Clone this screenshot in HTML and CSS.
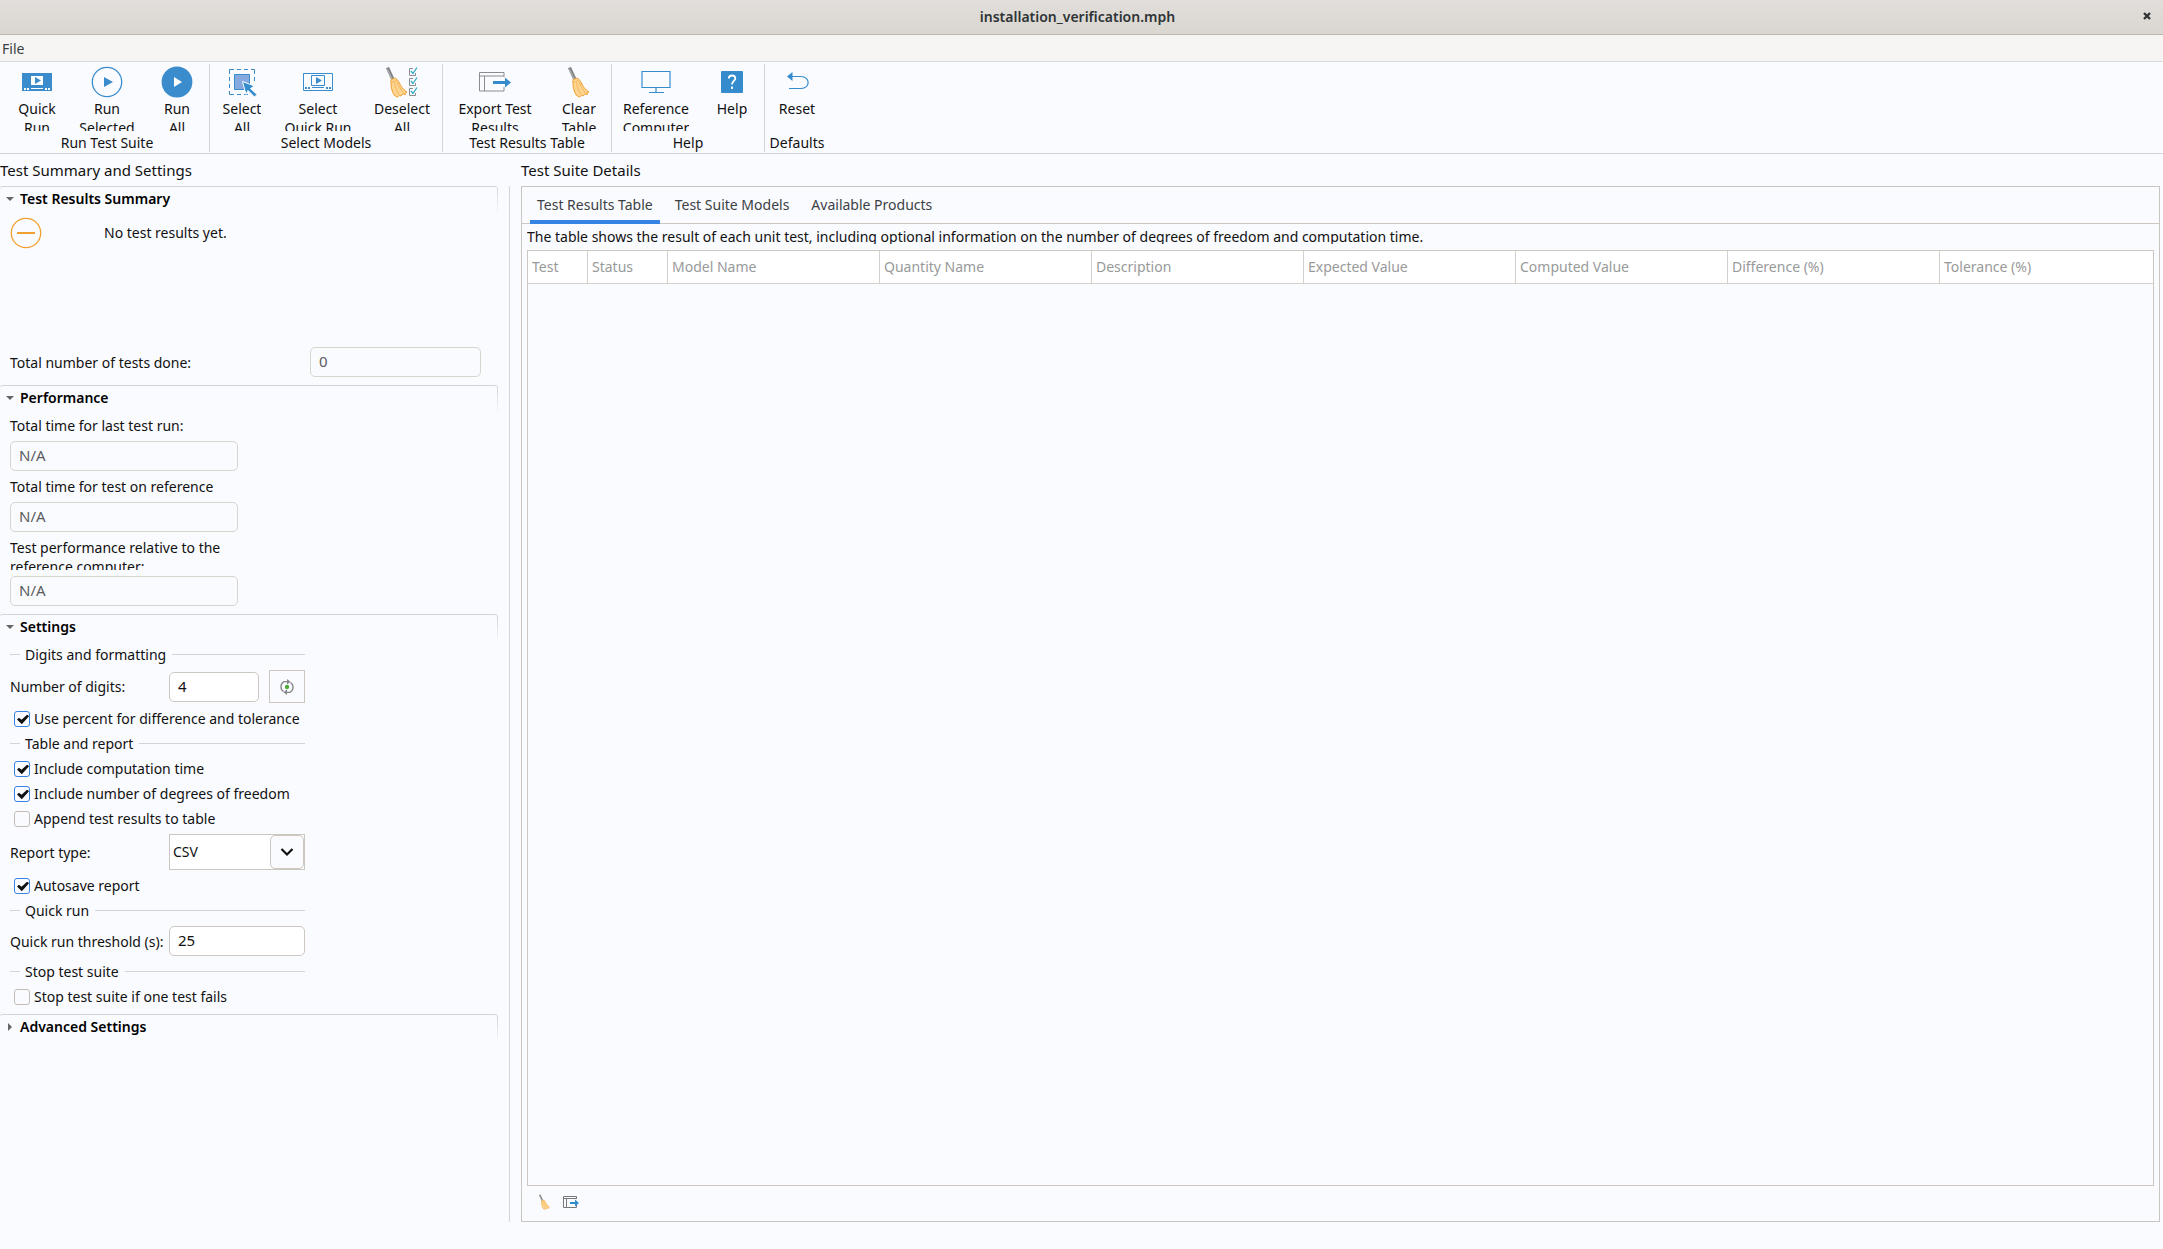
FILE: index.html
```html
<!DOCTYPE html>
<html lang="en">
<head>
  <meta charset="UTF-8" />
  <title>installation_verification.mph</title>
  <meta name="viewport" content="width=device-width, initial-scale=1.0" />
  <link rel="stylesheet" href="styles.css">
</head>
<body>
  <!-- shared icons -->
  <svg class="defs" width="0" height="0" aria-hidden="true">
    <symbol id="broom" viewBox="0 0 22 32">
      <path d="M0 2.2 3 1l6 13-3 1.4z" fill="#7f8283"/>
      <path d="M1.4 3.2 6.5 14" stroke="#b9bcbd" fill="none"/>
      <path d="M5 13.500 9.500 12c1.500 1.500 3 3 4 5 1.500 3.500 3.500 6.500 7.500 9l-2 1 .5 1.500-2.500-.5-2 2-1.500-.5-2 1.500-3-1.500C5.500 25.500 4.500 19 5 13.500z" fill="#fdd590" stroke="#f0a236"/>
      <path d="M8.500 16.500c.5 4 2 8 4.500 12M11 16c1.500 4 3.500 7.500 6.500 11M5 16.500l6-2" stroke="#f5b65c" fill="none"/>
    </symbol>
    <symbol id="export" viewBox="0 0 32 20">
      <path d="M25 5V.5H.5v18.500H25v-4M.5 4H25M5.500 4v15" fill="none" stroke="#8a8c8f"/>
      <path d="M14 9h12V5.500l6 5-6 5V12H14z" fill="#348ccd"/>
    </symbol>
  </svg>

  <header class="titlebar">
    <h1>installation_verification.mph</h1>
    <button class="close-btn" aria-label="Close">
      <svg width="8" height="8" viewBox="0 0 8 8"><path d="M1 1l6 6M7 1 1 7" stroke="#2e3436" stroke-width="2.400" fill="none"/></svg>
    </button>
  </header>

  <nav class="menubar"><button>File</button></nav>

  <div class="ribbon">
    <div class="group run-group">
      <div class="tools">
        <button class="tool">
          <svg width="32" height="32" viewBox="0 0 32 32">
            <path d="M1 7h30v18H1z" fill="#3a8ccd"/>
            <path d="M10 10h12v9H10z" fill="#fff"/>
            <path d="M14 11l6 3.500-6 3.500z" fill="#3a8ccd"/>
            <path d="M3 22h2v2H3zm3 0h2v2H6zm4 0h12v1H10zm14 0h2v2h-2zm3 0h2v2h-2z" fill="#fff"/>
          </svg>
          <span>Quick<br>Run</span>
        </button>
        <button class="tool mid">
          <svg width="32" height="32" viewBox="0 0 32 32">
            <circle cx="16" cy="16" r="14.700" fill="none" stroke="#3a8ccd" stroke-width="1.300"/>
            <path d="M13 11l9 5-9 5z" fill="#3a8ccd"/>
          </svg>
          <span>Run<br>Selected</span>
        </button>
        <button class="tool">
          <svg width="32" height="32" viewBox="0 0 32 32">
            <circle cx="16" cy="16" r="15.400" fill="#3a8ccd"/>
            <path d="M13 11l8 5-8 5z" fill="#fff"/>
          </svg>
          <span>Run<br>All</span>
        </button>
      </div>
      <div class="group-name">Run Test Suite</div>
    </div>

    <div class="group">
      <div class="tools">
        <button class="tool">
          <svg width="32" height="32" viewBox="0 0 32 32">
            <path d="M3.500 8V3.500H8m3 0h4m3 0h4m3 0h3.500V8m0 3v4M3.500 11v4m0 3v4m0 3v3.500H8m3 0h4m3 0h4" fill="none" stroke="#3a8ccd"/>
            <path d="M8.500 8.500h15v15h-15z" fill="#86aadf" stroke="#3a8ccd"/>
            <path d="M16.500 15.500l12 4.500-4 2.500 6.500 6-2.500 2.500-6.500-6.500-2 4z" fill="#348ccd" stroke="#fafbff"/>
          </svg>
          <span>Select<br>All</span>
        </button>
        <button class="tool wide">
          <svg width="32" height="32" viewBox="0 0 32 32">
            <path d="M1.500 7.500h29v17h-29zM9.500 9.500h13v10h-13z" fill="none" stroke="#3a8ccd"/>
            <path d="M14 11l6 3.500-6 3.500z" fill="#3a8ccd"/>
            <path d="M3 21h2v2H3zm3 0h2v2H6zm4 0h12v1H10zm14 0h2v2h-2zm3 0h2v2h-2z" fill="#3a8ccd"/>
          </svg>
          <span>Select<br>Quick Run</span>
        </button>
        <button class="tool large">
          <span class="icon-pair">
            <svg width="22" height="32"><use href="#broom"/></svg>
            <svg width="10" height="32" viewBox="0 0 10 32">
              <path d="M5 2.500H1.500v7h6V7M5 12.500H1.500v7h6V17M5 22.500H1.500v7h6V27" fill="none" stroke="#8a8c8f"/>
              <path d="M3 5l2 2.500 4-6M3 15l2 2.500 4-6M3 25l2 2.500 4-6" fill="none" stroke="#2fa9c4" stroke-width="1.300"/>
            </svg>
          </span>
          <span>Deselect<br>All</span>
        </button>
      </div>
      <div class="group-name">Select Models</div>
    </div>

    <div class="group">
      <div class="tools">
        <button class="tool export">
          <svg width="32" height="20"><use href="#export"/></svg>
          <span>Export Test<br>Results</span>
        </button>
        <button class="tool">
          <svg width="22" height="32"><use href="#broom"/></svg>
          <span>Clear<br>Table</span>
        </button>
      </div>
      <div class="group-name">Test Results Table</div>
    </div>

    <div class="group">
      <div class="tools">
        <button class="tool wide">
          <svg width="32" height="32" viewBox="0 0 32 32">
            <path d="M2 5.500h28v16H2zM16 22v4M9 26.500h15" fill="none" stroke="#348ccd" stroke-width="1.200"/>
          </svg>
          <span>Reference<br>Computer</span>
        </button>
        <button class="tool">
          <svg width="32" height="32" viewBox="0 0 32 32">
            <rect x="5" y="5" width="22" height="22" rx="1" fill="#348ccd"/>
            <path d="M12.800 12.500c0-4 6.500-4 6.500 0 0 2.500-3.300 2.500-3.300 6M16 20.500v2.500" fill="none" stroke="#fff" stroke-width="1.800"/>
          </svg>
          <span>Help</span>
        </button>
      </div>
      <div class="group-name">Help</div>
    </div>

    <div class="group">
      <div class="tools">
        <button class="tool">
          <svg width="32" height="32" viewBox="0 0 32 32">
            <path d="M9 10.500h11c9.500 0 9.500 12 0 12H8" fill="none" stroke="#348ccd" stroke-width="1.200"/>
            <path d="M6 10.500 11.500 6v9z" fill="#348ccd"/>
          </svg>
          <span>Reset</span>
        </button>
      </div>
      <div class="group-name">Defaults</div>
    </div>
  </div>

  <main class="workspace">
    <section class="side">
      <h2>Test Summary and Settings</h2>
      <div class="side-body">
        <details open>
          <summary>Test Results Summary</summary>
          <div class="rows">
            <div class="status">
              <svg width="32" height="32" viewBox="0 0 32 32">
                <circle cx="16" cy="16" r="14.700" fill="none" stroke="#f0a030" stroke-width="1.300"/>
                <path d="M7 16h18" stroke="#f0a030" stroke-width="2"/>
              </svg>
              <span>No test results yet.</span>
            </div>
            <div class="row total">
              <label for="done">Total number of tests done:</label>
              <input type="text" id="done" value="0" readonly>
            </div>
          </div>
        </details>

        <details open>
          <summary>Performance</summary>
          <div class="rows perf">
            <label for="last-run">Total time for last test run:</label>
            <div class="row"><input type="text" id="last-run" value="N/A" readonly></div>
            <label for="ref-run">Total time for test on reference</label>
            <div class="row"><input type="text" id="ref-run" value="N/A" readonly></div>
            <label for="relative"><span class="cut">Test performance relative to the reference computer:</span></label>
            <div class="row"><input type="text" id="relative" value="N/A" readonly></div>
          </div>
        </details>

        <details open>
          <summary>Settings</summary>
          <div class="rows settings">
            <div class="sep">Digits and formatting</div>
            <div class="row field">
              <label for="digits">Number of digits:</label>
              <input type="text" id="digits" value="4">
              <button class="refresh" aria-label="Reset digits">
                <svg width="16" height="16" viewBox="0 0 16 16">
                  <path d="M5 2.700a5.700 5.700 0 0 0-.5 9.800M11.500 3.500A5.700 5.700 0 0 1 11 13.300M5 2.700h4M11 13.300H7" fill="none" stroke="#85878a" stroke-width="1.300"/>
                  <path d="M8 0l3.500 2.700L8 5.400zM8 10.600v5.400l-3.500-2.700z" fill="#85878a"/>
                  <circle cx="8" cy="8" r="2.200" fill="#4fae3b"/>
                </svg>
              </button>
            </div>
            <label class="check"><input type="checkbox" checked>Use percent for difference and tolerance</label>
            <div class="sep">Table and report</div>
            <label class="check"><input type="checkbox" checked>Include computation time</label>
            <label class="check"><input type="checkbox" checked>Include number of degrees of freedom</label>
            <label class="check"><input type="checkbox">Append test results to table</label>
            <div class="row field">
              <label for="report-type">Report type:</label>
              <div class="combo">
                <select id="report-type">
                  <option selected>CSV</option>
                </select>
                <span class="combo-arrow">
                  <svg width="14" height="10" viewBox="0 0 14 10"><path d="M1.500 2 7 7.500 12.500 2" fill="none" stroke="#111" stroke-width="2.200"/></svg>
                </span>
              </div>
            </div>
            <label class="check"><input type="checkbox" checked>Autosave report</label>
            <div class="sep">Quick run</div>
            <div class="row field">
              <label for="threshold">Quick run threshold (s):</label>
              <input type="text" id="threshold" value="25">
            </div>
            <div class="sep">Stop test suite</div>
            <label class="check"><input type="checkbox">Stop test suite if one test fails</label>
          </div>
        </details>

        <details>
          <summary>Advanced Settings</summary>
        </details>
      </div>
    </section>

    <section class="main">
      <h2>Test Suite Details</h2>
      <div class="panel">
        <div class="tabs" role="tablist">
          <button class="tab active" role="tab" aria-selected="true">Test Results Table</button>
          <button class="tab" role="tab">Test Suite Models</button>
          <button class="tab" role="tab">Available Products</button>
        </div>
        <div class="tab-body">
          <p class="hint">The table shows the result of each unit test, including optional information on the number of degrees of freedom and computation time.</p>
          <div class="table-box">
            <table>
              <colgroup>
                <col class="c-test"><col class="c-status"><col class="c-data"><col class="c-data"><col class="c-data"><col class="c-data"><col class="c-data"><col class="c-data"><col>
              </colgroup>
              <thead>
                <tr>
                  <th>Test</th>
                  <th>Status</th>
                  <th>Model Name</th>
                  <th>Quantity Name</th>
                  <th>Description</th>
                  <th>Expected Value</th>
                  <th>Computed Value</th>
                  <th>Difference (%)</th>
                  <th>Tolerance (%)</th>
                </tr>
              </thead>
              <tbody></tbody>
            </table>
          </div>
          <div class="table-tools">
            <button aria-label="Clear table"><svg width="11" height="16"><use href="#broom"/></svg></button>
            <button aria-label="Export table">
              <svg width="16" height="14" viewBox="0 0 16 14">
                <path d="M13.500 4V1.500H.5v11h13V10M.5 3.500h13M3.500 4v8" fill="none" stroke="#77797c"/>
                <path d="M7 7h5V4.500L16 8l-4 3.500V9H7z" fill="#348ccd"/>
              </svg>
            </button>
          </div>
        </div>
      </div>
    </section>
  </main>
</body>
</html>
```
FILE: styles.css
```css
:root {
  --bg: #fafbff;
  --text: #111;
  --line: #d3d4d8;
  --frame: #cdc7c2;
  --accent: #3584e4;
}

* {
  box-sizing: border-box;
}

html, body {
  margin: 0;
  height: 100%;
}

body {
  display: flex;
  flex-direction: column;
  background: var(--bg);
  color: var(--text);
  font: 14px/19px "Noto Sans", "Open Sans", sans-serif;
}

button, input, select {
  font: inherit;
  color: inherit;
}

button {
  padding: 0;
  border: 0;
  background: none;
}

svg {
  display: block;
  flex: none;
}

.defs {
  position: absolute;
}

h1, h2, p {
  margin: 0;
}

/* window chrome */
.titlebar {
  display: flex;
  align-items: center;
  flex: none;
  height: 35px;
  padding: 0 8px 2px 16px;
  background: linear-gradient(to bottom, #e1dedb, #dad6d0);
  border-bottom: 1px solid #bfb8b1;
}

.titlebar h1 {
  flex: 1;
  text-align: center;
  font-size: 14px;
  font-weight: 600;
  line-height: 19px;
  color: #2e3436;
}

.close-btn {
  display: flex;
  align-items: center;
  justify-content: center;
  width: 16px;
  height: 16px;
}

.menubar {
  display: flex;
  align-items: center;
  flex: none;
  height: 27px;
  padding: 0 2px;
  background: #f6f5f4;
  border-bottom: 1px solid #dcdad8;
  color: #3b4144;
}

/* ribbon */
.ribbon {
  display: flex;
  flex: none;
  height: 92px;
  padding: 2px 0 1px;
  border-bottom: 1px solid var(--line);
}

.group {
  display: flex;
  flex-direction: column;
  justify-content: space-between;
  border-right: 1px solid var(--line);
}

.group:last-child {
  border-right: 0;
}

.run-group {
  padding-left: 5px;
}

.tools {
  display: flex;
}

.tool {
  display: flex;
  flex-direction: column;
  align-items: center;
  justify-content: space-between;
  width: 64px;
  height: 67px;
  padding-top: 2px;
}

.tool > span:last-child {
  height: 32px;
  overflow: hidden;
}

.tool.mid {
  width: 76px;
}

.tool.large {
  width: 80px;
}

.tool.wide {
  width: 88px;
}

.tool.export {
  width: 104px;
}

.tool.export svg {
  margin-top: 6px;
}

.icon-pair {
  display: flex;
}

.group-name {
  text-align: center;
}

/* workspace */
.workspace {
  display: flex;
  flex: 1;
  min-height: 0;
  padding: 0 3px 27px 0;
}

h2 {
  flex: none;
  height: 32px;
  padding: 6px 0;
  font-size: 15px;
  font-weight: 400;
  line-height: 20px;
}

.side {
  display: flex;
  flex-direction: column;
  flex: none;
  width: 510px;
}

.side-body {
  flex: 1;
  padding-right: 11px;
  border-right: 1px solid var(--line);
}

details {
  position: relative;
  border-top: 1px solid var(--line);
  border-radius: 3px;
}

/* right edge fades out below the header */
details::after {
  content: "";
  position: absolute;
  top: 1px;
  right: 0;
  width: 1px;
  height: 28px;
  background: linear-gradient(to bottom, var(--line), transparent);
}

summary {
  display: flex;
  height: 27px;
  padding: 2px 0 0 6px;
  font-weight: 600;
  color: #000;
}

summary::before {
  content: "";
  width: 8px;
  height: 4px;
  margin: 8px 6px 0 0;
  background: #666;
  clip-path: polygon(0 0, 100% 0, 50% 100%);
}

details:not([open]) summary::before {
  width: 4px;
  height: 8px;
  margin: 6px 8px 0 2px;
  clip-path: polygon(0 0, 100% 50%, 0 100%);
}

.rows {
  padding: 0 0 5px 10px;
}

.row {
  display: flex;
  align-items: center;
  padding: 3px 0;
}

input[type="text"] {
  width: 100%;
  height: 30px;
  padding: 0 8px 2px;
  border: 1px solid var(--frame);
  border-radius: 5px;
  background: #fff;
  font-size: 15px;
  outline: 0;
}

input[readonly] {
  border-color: #d8d4d0;
  background: var(--bg);
  color: #5a5c5e;
}

.status {
  display: flex;
  align-items: flex-start;
  gap: 62px;
  height: 130px;
  padding-top: 3px;
}

.status span {
  line-height: 32px;
}

.total label {
  width: 300px;
}

.total input[type="text"] {
  width: 171px;
}

.perf {
  width: 238px;
}

.perf label {
  display: block;
  padding: 3px 0;
}

.cut {
  display: block;
  height: 32px;
  overflow: hidden;
}

.settings {
  width: 305px;
}

.sep {
  display: flex;
  align-items: center;
  height: 25px;
  white-space: nowrap;
}

.sep::before, .sep::after {
  content: "";
  height: 1px;
  background: var(--line);
}

.sep::before {
  width: 10px;
  margin-right: 5px;
}

.sep::after {
  flex: 1;
  margin-left: 6px;
}

.field label {
  flex: none;
  width: 159px;
  white-space: nowrap;
}

.refresh {
  display: flex;
  align-items: center;
  justify-content: center;
  flex: none;
  width: 36px;
  height: 33px;
  margin-left: 10px;
  border: 1px solid var(--frame);
}

.check {
  display: flex;
  align-items: center;
  gap: 4px;
  height: 25px;
  padding-left: 4px;
  white-space: nowrap;
}

.check input {
  appearance: none;
  flex: none;
  width: 16px;
  height: 16px;
  margin: 0;
  border: 1px solid #c4bdb6;
  border-radius: 3px;
  background: var(--bg);
}

.check input:checked {
  border-color: var(--accent);
}

.check input:checked::before {
  content: "";
  display: block;
  width: 12px;
  height: 10px;
  margin: 3px 0 0 2px;
  background: #111;
  clip-path: polygon(0 50%, 16% 32%, 38% 52%, 86% 0, 100% 18%, 40% 98%);
}

.combo {
  position: relative;
  flex: 1;
  height: 36px;
  border: 1px solid var(--frame);
  background: #fff;
}

.combo select {
  appearance: none;
  width: 100%;
  height: 100%;
  padding: 0 36px 2px 3px;
  border: 0;
  background: none;
}

.combo-arrow {
  position: absolute;
  top: 0;
  right: 0;
  bottom: 0;
  display: flex;
  align-items: center;
  justify-content: center;
  width: 34px;
  border: 1px solid var(--frame);
  border-radius: 5px;
  background: var(--bg);
  pointer-events: none;
}

.main {
  display: flex;
  flex-direction: column;
  flex: 1;
  min-width: 0;
  margin-left: 11px;
}

.panel {
  display: flex;
  flex-direction: column;
  flex: 1;
  border: 1px solid #c9c5c0;
}

.tabs {
  display: flex;
  gap: 8px;
  height: 37px;
  padding-left: 8px;
  border-bottom: 1px solid var(--frame);
}

.tab {
  height: 37px;
  padding: 2px 7px 0;
  border-bottom: 4px solid transparent;
  color: #3b4144;
}

.tab.active {
  border-bottom-color: var(--accent);
}

.tab-body {
  display: flex;
  flex-direction: column;
  flex: 1;
  padding: 3px 5px 0;
}

.hint {
  height: 17px;
  margin-bottom: 6px;
  overflow: hidden;
}

.table-box {
  flex: 1;
  border: 1px solid var(--frame);
}

table {
  width: 100%;
  border-collapse: separate;
  border-spacing: 0;
  table-layout: fixed;
}

.c-test {
  width: 60px;
}

.c-status {
  width: 80px;
}

.c-data {
  width: 212px;
}

th {
  height: 33px;
  padding: 0 4px 2px;
  border-right: 1px solid #d5d0cc;
  border-bottom: 1px solid #d5d0cc;
  background: #fff;
  color: #989a9a;
  font-weight: 400;
  text-align: left;
  white-space: nowrap;
}

th:last-child {
  border-right: 0;
}

.table-tools {
  display: flex;
  align-items: center;
  gap: 13px;
  height: 35px;
  padding: 0 12px 3px;
}
```
